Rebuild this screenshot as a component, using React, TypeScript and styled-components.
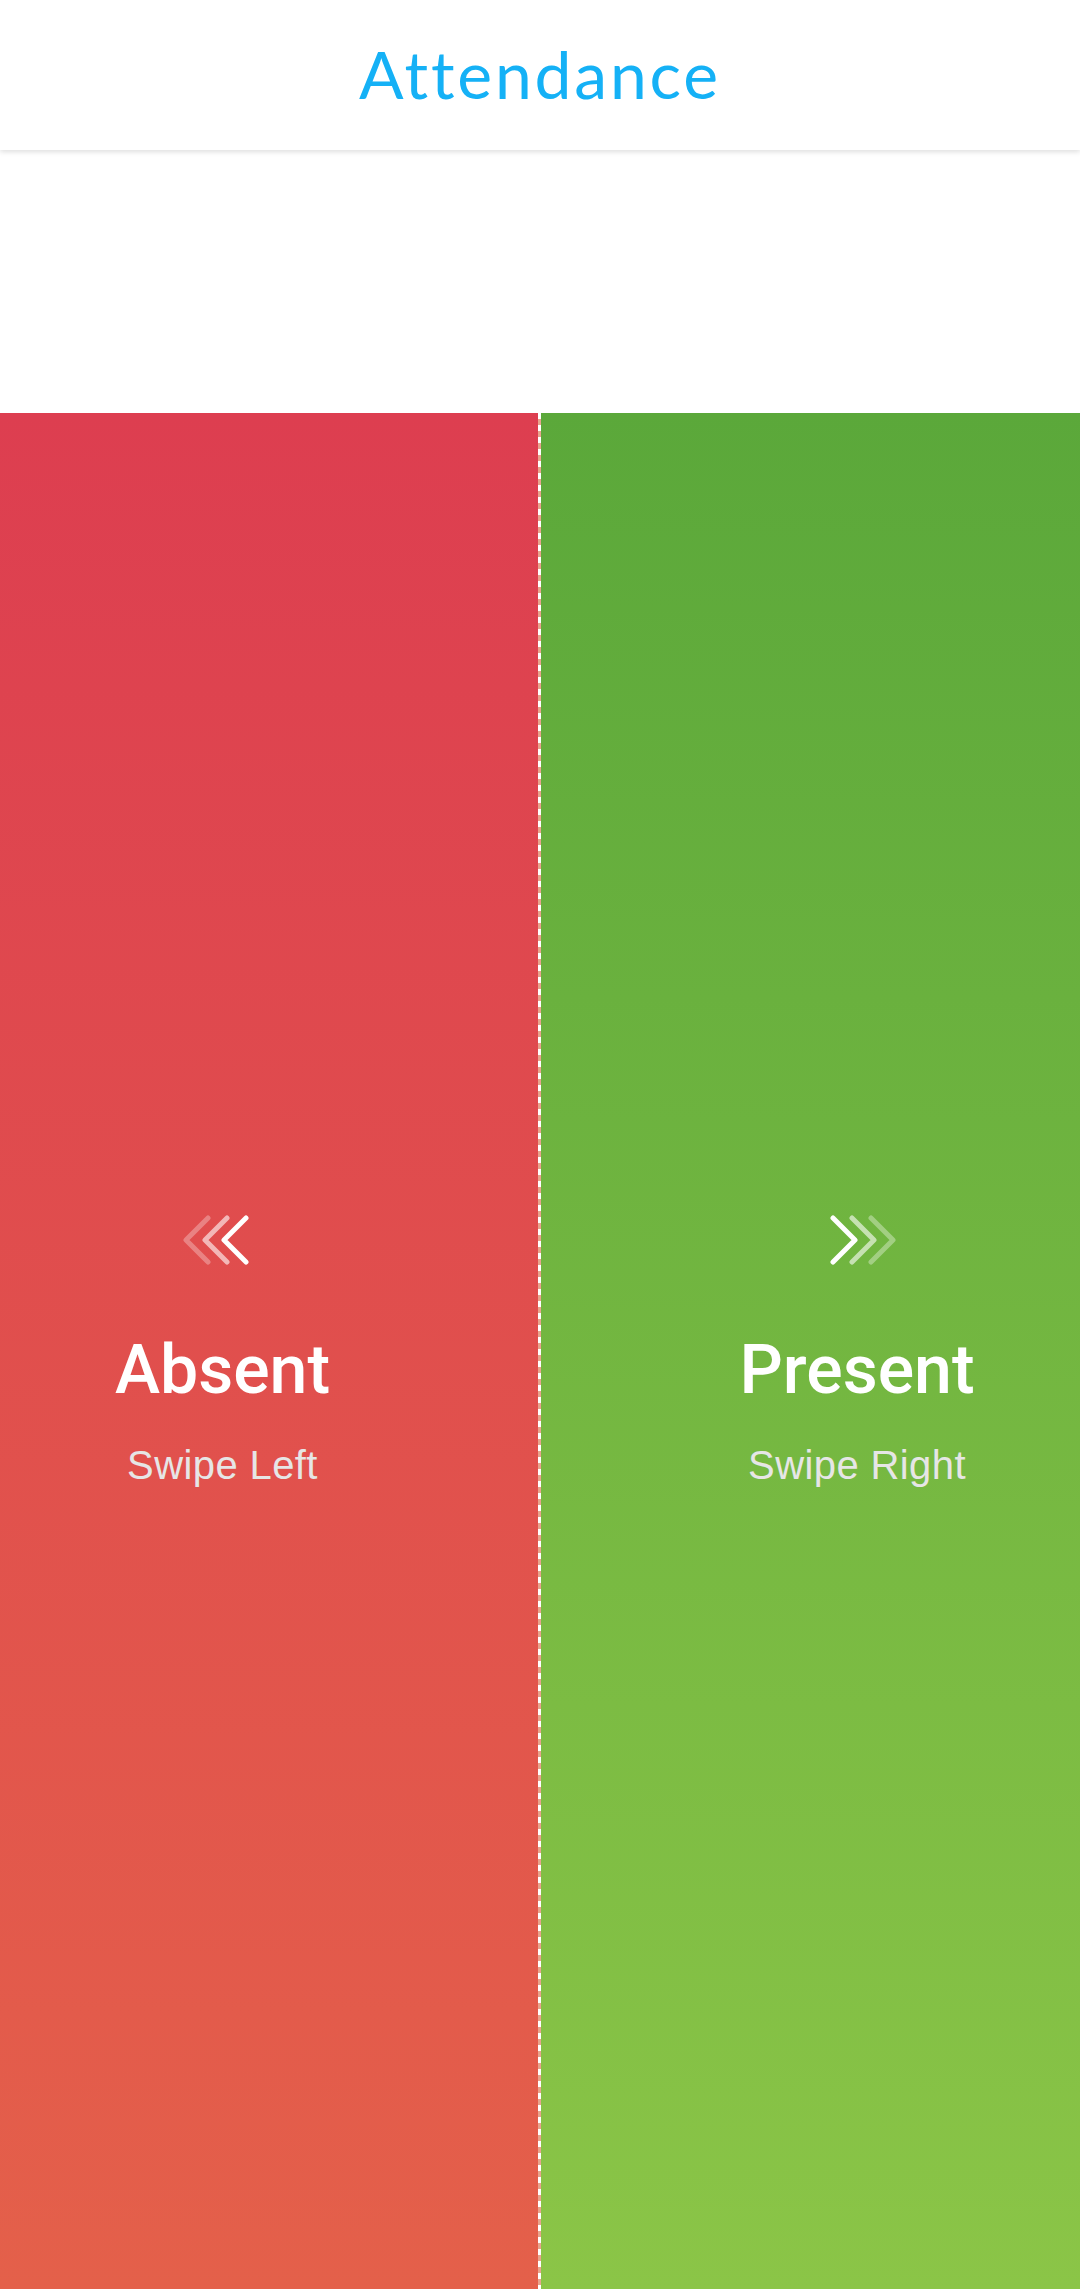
import React from "react";
import styled, { createGlobalStyle } from "styled-components";

const GlobalStyle = createGlobalStyle`
  html, body {
    margin: 0;
    padding: 0;
    background: #ffffff;
  }
  #root {
    width: 1080px;
  }
`;

const Screen = styled.div`
  width: 1080px;
  height: 2289px;
  display: flex;
  flex-direction: column;
  overflow: hidden;
  background: #ffffff;
`;

const Header = styled.header`
  position: relative;
  z-index: 2;
  height: 150px;
  flex-shrink: 0;
  display: flex;
  align-items: center;
  justify-content: center;
  background: #ffffff;
  box-shadow: 0 2px 5px rgba(0, 0, 0, 0.13);
`;

const Title = styled.h1`
  margin: 0;
  padding-bottom: 2px;
  font-family: "Lato", "Open Sans", sans-serif;
  font-weight: 400;
  font-size: 66px;
  letter-spacing: 2.8px;
  line-height: 1;
  color: #15b1f6;
`;

const Blank = styled.div`
  height: 263px;
  flex-shrink: 0;
`;

const Split = styled.div`
  flex: 1;
  display: flex;
`;

type SideProps = { $side: "left" | "right" };

const Panel = styled.section<SideProps>`
  flex: ${({ $side }) => ($side === "left" ? "0 0 538px" : "1")};
  display: flex;
  flex-direction: column;
  align-items: center;
  justify-content: center;
  padding-left: ${({ $side }) => ($side === "right" ? "93px" : "0")};
  padding-right: ${({ $side }) => ($side === "left" ? "93px" : "0")};
  box-sizing: border-box;
  background: ${({ $side }) =>
    $side === "left"
      ? "linear-gradient(180deg, #dd3e50 0%, #e4604a 100%)"
      : "linear-gradient(180deg, #5ba83a 0%, #8bc547 100%)"};
`;

const Divider = styled.div`
  flex: 0 0 3px;
  background: repeating-linear-gradient(
    180deg,
    #ffffff 0px,
    #ffffff 6px,
    #e8a48c 6px,
    #e8a48c 12px
  );
`;

const Arrows = styled.svg<SideProps>`
  display: block;
  width: 68px;
  height: 50px;
  margin-bottom: 65px;
  margin-right: ${({ $side }) => ($side === "left" ? "14px" : "0")};
  margin-left: ${({ $side }) => ($side === "right" ? "12px" : "0")};
`;

const Label = styled.div`
  font-family: "Roboto", "Liberation Sans", sans-serif;
  font-weight: 500;
  font-size: 68px;
  line-height: 80px;
  color: #ffffff;
  margin-bottom: 33px;
`;

const Hint = styled.div`
  font-family: "Liberation Sans", Arial, sans-serif;
  font-weight: 400;
  font-size: 40px;
  line-height: 44px;
  letter-spacing: 0.4px;
  color: #e6e6e6;
`;

const Chevrons = ({ dir }: { dir: "left" | "right" }) => {
  const offsets = [0, 19, 38];
  const opacities = dir === "left" ? [0.3, 0.6, 1] : [1, 0.6, 0.35];
  return (
    <Arrows $side={dir} viewBox="0 0 68 50">
      {offsets.map((x, i) => (
        <path
          key={i}
          d={
            dir === "left"
              ? `M${x + 26} 3 L${x + 4} 25 L${x + 26} 47`
              : `M${x + 4} 3 L${x + 26} 25 L${x + 4} 47`
          }
          fill="none"
          stroke="#ffffff"
          strokeOpacity={opacities[i]}
          strokeWidth={5}
          strokeLinecap="round"
          strokeLinejoin="round"
        />
      ))}
    </Arrows>
  );
};

export default function App() {
  return (
    <Screen>
      <GlobalStyle />
      <Header>
        <Title>Attendance</Title>
      </Header>
      <Blank />
      <Split>
        <Panel $side="left">
          <Chevrons dir="left" />
          <Label>Absent</Label>
          <Hint>Swipe Left</Hint>
        </Panel>
        <Divider />
        <Panel $side="right">
          <Chevrons dir="right" />
          <Label>Present</Label>
          <Hint>Swipe Right</Hint>
        </Panel>
      </Split>
    </Screen>
  );
}
